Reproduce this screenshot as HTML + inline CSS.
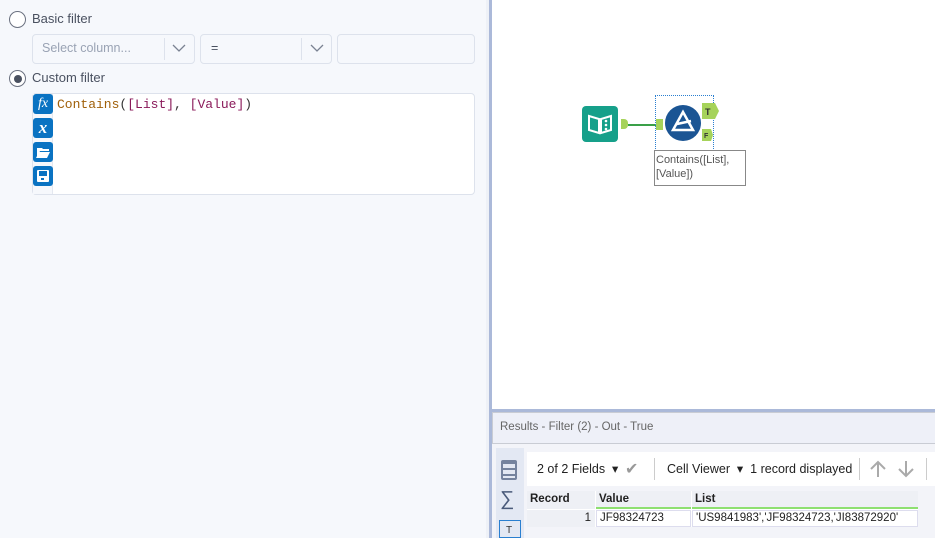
<!DOCTYPE html>
<html><head><style>
*{box-sizing:border-box;margin:0;padding:0}
body{width:935px;height:538px;overflow:hidden;position:relative;font-family:"Segoe UI","Liberation Sans",sans-serif;background:#fff}
.abs{position:absolute}
.left{left:0;top:0;width:486px;height:538px;background:#f6f8fc}
.radio{width:17px;height:17px;border:1.5px solid #6b7180;border-radius:50%;background:#fff}
.lbl{font-size:13px;color:#4a5160}
.box{border:1px solid #dde2ec;border-radius:4px;background:#f6f8fc}
.ico{width:20px;height:20px;background:#0a73c2;border-radius:3px;color:#fff;text-align:center}
</style></head><body>
<div class="abs left">
  <div class="abs radio" style="left:9px;top:11px"></div>
  <div class="abs lbl" style="left:32px;top:11px">Basic filter</div>
  <div class="abs box" style="left:32px;top:34px;width:163px;height:30px"></div>
  <div class="abs lbl" style="left:42px;top:41px;color:#9aa3b4;font-size:12.5px">Select column...</div>
  <div class="abs" style="left:164px;top:38px;width:1px;height:22px;background:#dde2ec"></div>
  <svg class="abs" style="left:172px;top:44px" width="14" height="9"><path d="M1 1l6 6 6-6" stroke="#7a8292" fill="none" stroke-width="1.3"/></svg>
  <div class="abs box" style="left:200px;top:34px;width:132px;height:30px"></div>
  <div class="abs lbl" style="left:211px;top:41px;font-size:12.5px">=</div>
  <div class="abs" style="left:301px;top:38px;width:1px;height:22px;background:#dde2ec"></div>
  <svg class="abs" style="left:310px;top:44px" width="14" height="9"><path d="M1 1l6 6 6-6" stroke="#7a8292" fill="none" stroke-width="1.3"/></svg>
  <div class="abs box" style="left:337px;top:34px;width:138px;height:30px"></div>
  <div class="abs radio" style="left:9px;top:70px"></div>
  <div class="abs" style="left:14px;top:75px;width:8px;height:8px;border-radius:50%;background:#4a5160"></div>
  <div class="abs lbl" style="left:32px;top:70px">Custom filter</div>
  <div class="abs" style="left:32px;top:93px;width:443px;height:102px;border:1px solid #dde2ec;border-radius:4px;background:#fff"></div>
  <div class="abs" style="left:33px;top:94px;width:20px;height:100px;background:#f6f8fc;border-right:1px solid #e4e8f0"></div>
  <div class="abs ico" style="left:33px;top:94px;font:italic 14px 'Liberation Serif',serif;line-height:19px">fx</div>
  <div class="abs ico" style="left:33px;top:118px;font:italic bold 17px 'Liberation Serif',serif;line-height:19px">x</div>
  <div class="abs ico" style="left:33px;top:142px"><svg width="20" height="20"><path d="M4 6h5l1 1h6v2H7l-3 6z M6 10h11l-3 6H3z" fill="#fff"/></svg></div>
  <div class="abs ico" style="left:33px;top:166px"><svg width="20" height="20"><rect x="4" y="4" width="12" height="12" rx="1" fill="#fff"/><rect x="6" y="5" width="8" height="5" fill="#0a73c2"/><rect x="8" y="12" width="3" height="2" fill="#0a73c2"/></svg></div>
  <div class="abs" style="left:57px;top:97px;font:13px 'Liberation Mono',monospace;color:#a0600a">Contains<span style="color:#333">(</span><span style="color:#8a1a5a">[List]</span><span style="color:#333">, </span><span style="color:#8a1a5a">[Value]</span><span style="color:#333">)</span></div>
</div>
<div class="abs" style="left:486px;top:0;width:3px;height:538px;background:#eef1f7"></div>
<div class="abs" style="left:489px;top:0;width:3px;height:538px;background:#abb9d9"></div>
<!-- canvas tools -->
<div class="abs" style="left:582px;top:106px;width:36px;height:36px;background:#16a08a;border-radius:4px"></div>
<svg class="abs" style="left:582px;top:106px" width="36" height="36"><path d="M7 10l10 3v14l-10-3z M29 10l-10 3v14l10-3z" fill="none" stroke="#fff" stroke-width="2"/><circle cx="24" cy="15" r="1.3" fill="#fff"/><circle cx="24" cy="19" r="1.3" fill="#fff"/><circle cx="24" cy="23" r="1.3" fill="#fff"/></svg>
<div class="abs" style="left:621px;top:119px;width:7px;height:10px;background:#a6d35a;border-radius:0 4px 4px 0"></div>
<div class="abs" style="left:628px;top:124px;width:28px;height:2px;background:#3aa048"></div>
<div class="abs" style="left:655px;top:95px;width:59px;height:90px;border:1px dotted #2a7fd0"></div>
<div class="abs" style="left:656px;top:119px;width:7px;height:11px;background:#a6d35a"></div>
<div class="abs" style="left:665px;top:105px;width:36px;height:36px;border-radius:50%;background:#1b5594"></div>
<svg class="abs" style="left:665px;top:105px" width="36" height="36"><path d="M18 7l10 18H8z M12 19l14-3" fill="none" stroke="#fff" stroke-width="2.5"/></svg>
<svg class="abs" style="left:702px;top:103px" width="18" height="40"><path d="M0 0h13l4 8-4 8H0z" fill="#a6d35a"/><text x="3" y="12" font-family="Liberation Sans" font-weight="bold" font-size="9" fill="#333">T</text><path d="M0 26h9l2 6-2 6H0z" fill="#a6d35a"/><text x="2" y="35" font-family="Liberation Sans" font-weight="bold" font-size="7" fill="#333">F</text></svg>
<div class="abs" style="left:654px;top:150px;width:92px;height:36px;border:1px solid #888;background:#fff;font-size:11px;color:#555;line-height:14px;padding:2px 1px">Contains([List],<br>[Value])</div>
<!-- results -->
<div class="abs" style="left:492px;top:409px;width:443px;height:3px;background:#abb9d9"></div>
<div class="abs" style="left:492px;top:412px;width:443px;height:32px;background:#eef0f8;border:1px solid #c9ccd4;border-right:none"></div>
<div class="abs" style="left:500px;top:421px;font-size:11.5px;color:#666">Results - Filter (2) - Out - True</div>
<div class="abs" style="left:492px;top:444px;width:443px;height:94px;background:#f3f4f9"></div>
<div class="abs" style="left:496px;top:448px;width:28px;height:90px;background:#e3e8f3"></div>
<div class="abs" style="left:501px;top:460px;width:16px;height:20px;border:2px solid #5a6a8a;border-width:2px;background:repeating-linear-gradient(#5a6a8a 0 2px,transparent 2px 6px);border-radius:2px;opacity:.8"></div>
<div class="abs" style="left:500px;top:488px;font-size:20px;color:#4a5a7a;line-height:22px">∑</div>
<div class="abs" style="left:499px;top:520px;width:22px;height:18px;border:1px solid #2a7fd0;font:10px 'Liberation Sans';color:#333;padding:4px 0 0 6px">T</div>
<div class="abs" style="left:527px;top:452px;width:408px;height:34px;background:#fff"></div>
<div class="abs" style="left:537px;top:461px;font-size:12.5px;color:#222">2 of 2 Fields &nbsp;▾</div>
<div class="abs" style="left:625px;top:459px;font-size:16px;color:#999">✔</div>
<div class="abs" style="left:654px;top:458px;width:1px;height:22px;background:#ccc"></div>
<div class="abs" style="left:667px;top:461px;font-size:12.5px;color:#222">Cell Viewer &nbsp;▾ &nbsp;1 record displayed</div>
<div class="abs" style="left:859px;top:458px;width:1px;height:22px;background:#ccc"></div>
<svg class="abs" style="left:868px;top:459px" width="50" height="20"><path d="M10 18V3M3 10l7-7 7 7M38 2v15M31 10l7 7 7-7" stroke="#aaa" stroke-width="2" fill="none"/></svg>
<div class="abs" style="left:926px;top:458px;width:1px;height:22px;background:#ccc"></div>
<div class="abs" style="left:527px;top:491px;width:391px;height:36px;background:#fff;font-size:11.5px;color:#222">
  <div class="abs" style="left:0;top:0;width:68px;height:18px;background:#eef0f5;font-weight:bold;padding:2px 3px">Record</div>
  <div class="abs" style="left:69px;top:0;width:95px;height:18px;background:#eef0f5;border-bottom:2px solid #8ee070;font-weight:bold;padding:2px 3px">Value</div>
  <div class="abs" style="left:165px;top:0;width:226px;height:18px;background:#eef0f5;border-bottom:2px solid #8ee070;font-weight:bold;padding:2px 3px">List</div>
  <div class="abs" style="left:0;top:19px;width:68px;height:17px;background:#eef0f5;text-align:right;padding:2px 4px">1</div>
  <div class="abs" style="left:69px;top:19px;width:95px;height:17px;border:1px solid #dde;padding:1px 3px">JF98324723</div>
  <div class="abs" style="left:165px;top:19px;width:226px;height:17px;border:1px solid #dde;padding:1px 3px">'US9841983','JF98324723,'JI83872920'</div>
</div>
</body></html>
